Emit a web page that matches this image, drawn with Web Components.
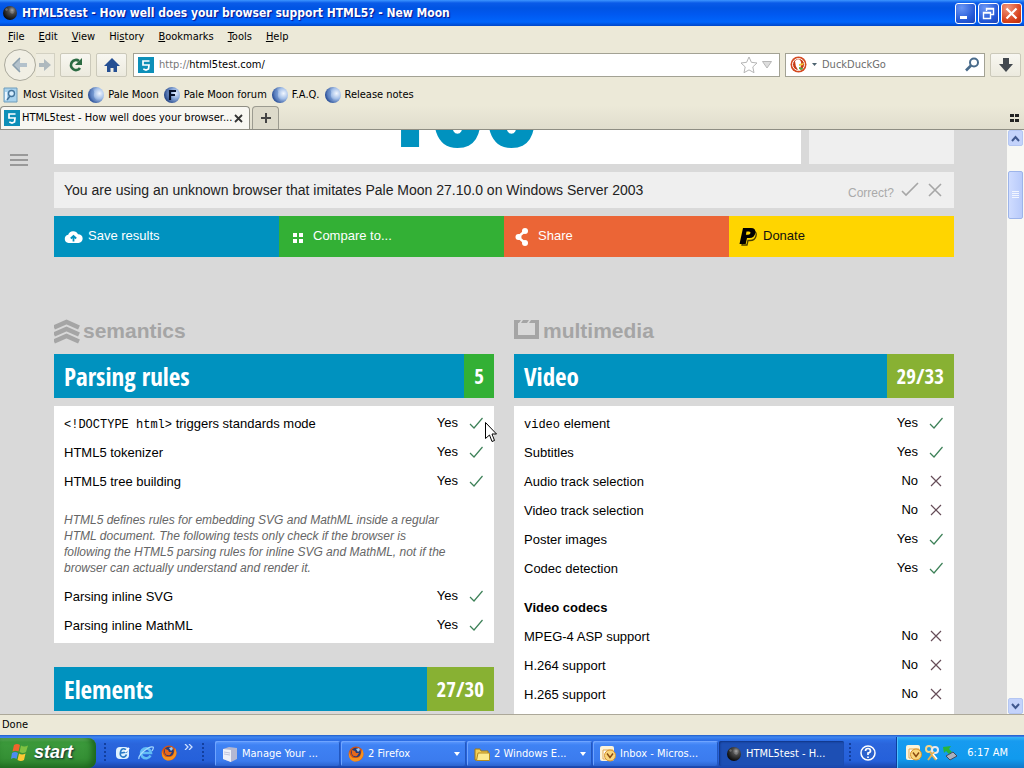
<!DOCTYPE html>
<html lang="en">
<head>
<meta charset="utf-8">
<title>HTML5test - How well does your browser support HTML5?</title>
<style>
html, body { margin: 0; height: 100%; overflow: hidden; }
body { font: 11px/16px "DejaVu Sans Condensed", "DejaVu Sans", sans-serif; color: #000; background: #ece9d8; }
</style>
</head>
<body>
<desktop-screen></desktop-screen>
<script>
const BASE = `*{box-sizing:border-box}svg{display:block;flex:none}
button{font:inherit;color:inherit;background:none;border:0;padding:0;margin:0}
a{color:inherit;text-decoration:none}`;
function define(name, html) {
  customElements.define(name, class extends HTMLElement {
    constructor() {
      super();
      const root = this.attachShadow({ mode: 'open' });
      const t = document.createElement('template');
      t.innerHTML = '<style>' + BASE + '</style>' + (typeof html === 'function' ? html(this) : html);
      root.append(t.content.cloneNode(true));
    }
  });
}

const ICONS = {
  moon: `<svg width="16" height="16" viewBox="0 0 16 16"><defs><radialGradient id="g" cx=".65" cy=".3" r=".7"><stop offset="0" stop-color="#aaa"/><stop offset=".35" stop-color="#4c4c4c"/><stop offset="1" stop-color="#0c0c0c"/></radialGradient></defs><circle cx="8" cy="8" r="7" fill="url(#g)"/><path d="M3 4l2-1 1 2-2 1zM8 7l3-1 1 2-2 1z" fill="#888" opacity=".6"/></svg>`,
  html5: `<svg width="16" height="16" viewBox="0 0 16 16"><path fill="#0d8fb8" d="M0 0h16v16H0z"/><path d="M11.500 4H5v4h6l-.5 4L8 13l-2.700-1" fill="none" stroke="#fff" stroke-width="1.700"/></svg>`,
  globe: `<svg width="16" height="16" viewBox="0 0 16 16"><defs><radialGradient id="g" cx=".72" cy=".4" r=".75"><stop offset="0" stop-color="#f2f7ff"/><stop offset=".45" stop-color="#a3bfe8"/><stop offset="1" stop-color="#1c4390"/></radialGradient></defs><circle cx="8" cy="8" r="8" fill="url(#g)"/><path d="M4 2q3 2 2 5t2 6q-4 0-5-3T4 2z" fill="#5580c4" opacity=".5"/></svg>`,
  forum: `<svg width="16" height="16" viewBox="0 0 16 16"><defs><radialGradient id="g" cx=".72" cy=".4" r=".75"><stop offset="0" stop-color="#e2ecff"/><stop offset=".45" stop-color="#87a6d8"/><stop offset="1" stop-color="#1c3d80"/></radialGradient></defs><circle cx="8" cy="8" r="8" fill="url(#g)"/><path d="M6 13V4h6M6 8h5" fill="none" stroke="#06102a" stroke-width="2.200"/></svg>`,
  visited: `<svg width="16" height="16" viewBox="0 0 16 16"><path d="M1 1h13v14H1z" fill="#a9d3ee" stroke="#6f9cba"/><path d="M3 13V5" stroke="#eaf6ff" stroke-width="2"/><circle cx="8.500" cy="6.500" r="3" fill="#d9efff" stroke="#44759c" stroke-width="1.400"/><path d="M7 9l-3 4" stroke="#44759c" stroke-width="1.600"/></svg>`,
  check: `<svg width="14" height="14" viewBox="0 0 14 14"><path d="M1 8l4 4 8.500-10" fill="none" stroke="#3d8158" stroke-width="1.200"/></svg>`,
  cross: `<svg width="14" height="14" viewBox="0 0 14 14"><path d="M2 2l10 10M12 2L2 12" fill="none" stroke="#664d58" stroke-width="1.200"/></svg>`,
  cloud: `<svg width="20" height="20" viewBox="0 0 20 20"><path d="M4.500 17a4.200 4.200 0 0 1-.3-8.300A5.300 5.300 0 0 1 14 8.200 4.400 4.400 0 0 1 14.500 17z" fill="#fff"/><path d="M9.500 15.500V10M6.800 12.500L9.500 10l2.700 2.500" fill="none" stroke="#0092bf" stroke-width="1.800"/></svg>`,
  grid: `<svg width="20" height="20" viewBox="0 0 20 20"><path d="M4 7h4v4H4zM10 7h4v4h-4zM4 13h4v4H4zM10 13h4v4h-4z" fill="#fff"/></svg>`,
  share: `<svg width="20" height="20" viewBox="0 0 20 20"><path d="M11 5L4 11l7 6" fill="none" stroke="#fff" stroke-width="2.400"/><circle cx="11" cy="5" r="3" fill="#fff"/><circle cx="4.500" cy="11" r="3" fill="#fff"/><circle cx="11" cy="17" r="3" fill="#fff"/></svg>`,
  paypal: `<svg width="20" height="20" viewBox="0 0 20 20"><path d="M15 5q3 1.500 2 5-1 4.500-6 4.500H9l-1 4.500H3l.2-1.200" fill="none" stroke="#4d4200" stroke-width="1.300"/><path d="M4 2h8q5 0 4.300 5Q15.500 12 10.500 12H8l-1.300 6H.5zM7.500 5.500l-.6 3.300H9q2.200 0 2.500-1.700Q11.700 5.500 10 5.500z" fill="#000" fill-rule="evenodd"/></svg>`,
  firefox: `<svg width="16" height="16" viewBox="0 0 16 16"><circle cx="8" cy="8" r="7.500" fill="#d9530e"/><circle cx="8" cy="6.500" r="4.800" fill="#263c78"/><path d="M1 5q1 8 7 7 4 0 5-4l1-5q3 5 0 9-3 4-8 3.500Q0 14 1 5z" fill="#f5921e"/><path d="M4 4l3 1 1 2 3 0-2 3q-4 1-5-2z" fill="#e7681b"/><path d="M8 3l3-1 1 2-2 2z" fill="#9cc8ef"/></svg>`,
  ie: `<svg width="16" height="16" viewBox="0 0 16 16"><path d="M12.500 10.500A5 5 0 1 1 13 8H4" fill="none" stroke="#62bdf5" stroke-width="2.600"/><path d="M1 14Q0 11 6 6t9-4q1 1-1 4" fill="none" stroke="#a8dcff" stroke-width="1.200"/></svg>`,
  desktop: `<svg width="16" height="16" viewBox="0 0 16 16"><rect x="1" y="2" width="13" height="12" rx="4" fill="#dff2ff"/><path d="M11.500 9.500q-1 3-4 2.500-3-1-2-5t4-3 2 3L6 8" fill="none" stroke="#2a7ac8" stroke-width="1.600"/><path d="M10 7l4-4" stroke="#fff" stroke-width="2"/></svg>`,
  server: `<svg width="16" height="16" viewBox="0 0 16 16"><path d="M1 3l6-2 8 1v11l-6 3-8-3z" fill="#b5b8d2"/><path d="M1 3l8 1v12l-8-3z" fill="#eef0f9"/><path d="M2 6l6 1M2 8l6 1" stroke="#c0c4dc"/></svg>`,
  folder: `<svg width="16" height="16" viewBox="0 0 16 16"><path d="M1 14V3h5l1 2h7v9z" fill="#f3cf55" stroke="#a37912"/><path d="M2.500 14.500L4 7h11.500v7.500z" fill="#fdeb90" stroke="#b58b20"/></svg>`,
  outlook: `<svg width="16" height="16" viewBox="0 0 16 16"><rect width="14" height="15" rx="2" fill="#fdf3d8"/><path d="M3 4h10v9H3z" fill="#fff" stroke="#e0a850"/><circle cx="10" cy="9.500" r="5.500" fill="#f9d67c" stroke="#d8932c"/><path d="M7 7.500l3 4 3-4" fill="none" stroke="#8a4a10" stroke-width="1.400"/></svg>`,
  keys: `<svg width="16" height="16" viewBox="0 0 16 16"><circle cx="5" cy="4" r="3" fill="none" stroke="#f5d68a" stroke-width="2"/><circle cx="11" cy="5" r="3" fill="none" stroke="#e9e9ef" stroke-width="2"/><path d="M6 7l6 8M10 7l-6 8" stroke="#e8b04c" stroke-width="2"/><path d="M9 9l4 5" stroke="#fff" stroke-width="1.500"/></svg>`,
  remove: `<svg width="16" height="16" viewBox="0 0 16 16"><path d="M1 2l8-1-2 3 3 3-3 2-3-3-2 2z" fill="#27b53a"/><path d="M4 11l7-4 4 4-7 4z" fill="#aab0bd" stroke="#3f4a60"/></svg>`,
  semantics: `<svg width="26" height="26" viewBox="0 0 26 26"><path d="M0 9.500L12.500 4 25 9.500M0 16.500L12.500 11 25 16.500M0 23.500L12.500 18 25 23.500" fill="none" stroke="#a5a5a5" stroke-width="4.600"/></svg>`,
  multimedia: `<svg width="26" height="26" viewBox="0 0 26 26"><path d="M2 4.500V19h21V4.500" fill="none" stroke="#a5a5a5" stroke-width="4"/><path d="M0 2h7L5 5H0zM9 2h6l-2 3H7zM17 2h8v3H15z" fill="#a5a5a5"/></svg>`
};
define('ui-icon', el => `<style>:host{display:block;flex:none}</style>${ICONS[el.getAttribute('name')]}`);

define('title-bar', `<style>
:host{display:flex;align-items:center;height:26px;padding:0 2px;gap:4px;color:#fff;background:linear-gradient(#3d95ff 0,#0a5be8 3px,#0054e3 8px,#0058f0 14px,#0065fc 22px,#0046c8 26px);font-weight:bold;font-size:12px}
.t{flex:1;text-shadow:1px 1px 1px #0f1089}.b{display:flex;gap:2px}
button{width:21px;height:21px;border:1px solid #fff;border-radius:3px;background:radial-gradient(circle at 30% 20%,#6a96f5,#2458d6 65%,#1c45b8)}
.x{background:radial-gradient(circle at 30% 20%,#f0967c,#d8421c 65%,#b52c0c)}
</style><ui-icon name="moon"></ui-icon><span class="t">HTML5test - How well does your browser support HTML5? - New Moon</span>
<div class="b"><button aria-label="Minimize"><svg width="19" height="19"><path d="M4 12h7v3H4z" fill="#fff"/></svg></button>
<button aria-label="Restore"><svg width="19" height="19"><path d="M7.500 7V4.500h7v6H12M7 5h8M4.500 8.500h7v6h-7zM4 9h8" fill="none" stroke="#fff" stroke-width="1.400"/></svg></button>
<button class="x" aria-label="Close"><svg width="19" height="19"><path d="M4.500 4.500l10 10M14.500 4.500l-10 10" stroke="#fff" stroke-width="2.200"/></svg></button></div>`);

define('menu-bar', `<style>:host{display:flex;align-items:center;height:21px;padding:0 8px;gap:14px}</style>
<button><u>F</u>ile</button><button><u>E</u>dit</button><button><u>V</u>iew</button><button>Hi<u>s</u>tory</button><button><u>B</u>ookmarks</button><button><u>T</u>ools</button><button><u>H</u>elp</button>`);

define('nav-bar', `<style>
:host{display:flex;align-items:center;height:35px;padding:0 3px 0 4px;gap:5px}
button{display:grid;place-items:center}
.bf{display:flex;align-items:center}
.back{width:32px;height:32px;border:1px solid #aaa99c;border-radius:50%;background:#f1efe4}
.fwd{width:19px;height:24px;border:1px solid #d3d1c2;border-left:0;background:#efede1}
.btn{width:31px;height:24px;border:1px solid #cbc9ba;border-radius:2px;background:linear-gradient(#f8f7f1,#eceade)}
.field{display:flex;align-items:center;height:24px;background:#fff;border:1px solid #a3a294}
.url{flex:1;padding:0 5px 0 4px;min-width:0}.search{width:200px;padding:0 4px;gap:4px}
input{font:inherit;border:0;padding:0;margin:0;background:none;min-width:0;flex:1;outline:0;color:#000}
input::placeholder{color:#6d6d6d;opacity:1}
.p{color:#777;margin-left:5px}.home{margin-right:1px}
</style>
<div class="bf"><button class="back" aria-label="Back"><svg width="18" height="18" viewBox="0 0 18 18"><path d="M9 2L2 9l7 7v-5h7V7H9z" fill="#b3c1cb"/><path d="M9 2L2 9l7 7" fill="none" stroke="#8a9eac" stroke-width="1.500"/></svg></button>
<button class="fwd" aria-label="Forward"><svg width="14" height="14" viewBox="0 0 14 14"><path d="M6 1l7 6-7 6V9H1V5h5z" fill="#aeb9be"/></svg></button></div>
<button class="btn" aria-label="Reload"><svg width="16" height="16" viewBox="0 0 16 16"><path d="M12 11a5 5 0 1 1-1-7" fill="none" stroke="#2c6b43" stroke-width="2.800"/><path d="M14 1v7H7z" fill="#2c6b43"/></svg></button>
<button class="btn home" aria-label="Home"><svg width="16" height="16" viewBox="0 0 16 16"><path d="M8 1l8 8h-3v6H9.500v-4h-3v4H3V9H0z" fill="#244f93"/></svg></button>
<div class="field url"><ui-icon name="html5"></ui-icon><span class="p">http://</span><input aria-label="Address" value="html5test.com/">
<svg width="18" height="18" viewBox="0 0 18 18"><path d="M9 1l2.400 5.300 5.600.7-4.200 3.900 1.200 5.800L9 13.900l-5 2.800 1.200-5.800L1 7l5.600-.7z" fill="#fff" stroke="#b5b5b5"/></svg>
<svg width="16" height="12" viewBox="0 0 16 12"><path d="M4.500 2.500h9L9 9z" fill="#ddd" stroke="#b7b7b7"/></svg></div>
<div class="field search"><svg width="17" height="17" viewBox="0 0 17 17"><circle cx="8.500" cy="8.500" r="8" fill="#d44a20"/><circle cx="8.500" cy="8.500" r="6" fill="#c73c16" stroke="#fff"/><path d="M5 5q3-3 5-1 2 2 1 5l-1 5H8Q5 10 5 5z" fill="#fff"/><path d="M9 8l5-1-1 2-4 1z" fill="#f8c83c"/><path d="M9 11l4 1-1 2-3-1z" fill="#55a847"/></svg>
<svg width="7" height="5"><path d="M1 1h5L3.500 4z" fill="#4d6370"/></svg><input aria-label="Search" placeholder="DuckDuckGo">
<svg width="15" height="15" viewBox="0 0 15 15"><circle cx="9" cy="5.500" r="4" fill="none" stroke="#496b8b" stroke-width="2"/><path d="M6 8.500l-5 5" stroke="#496b8b" stroke-width="2.600"/></svg></div>
<button class="btn" aria-label="Downloads"><svg width="16" height="16" viewBox="0 0 16 16"><path d="M5 1h6v6h4l-7 8-7-8h4z" fill="#42484e"/></svg></button>`);

define('bookmark-link', el => `<style>:host{display:block}a{display:flex;align-items:center;gap:4px}</style><a href="#"><ui-icon name="${el.getAttribute('icon')}"></ui-icon><slot></slot></a>`);
define('bookmarks-bar', `<style>:host{box-sizing:border-box;display:flex;align-items:center;height:24px;padding:2px 3px 0;gap:5px}</style>
<bookmark-link icon="visited">Most Visited</bookmark-link><bookmark-link icon="globe">Pale Moon</bookmark-link><bookmark-link icon="forum">Pale Moon forum</bookmark-link><bookmark-link icon="globe">F.A.Q.</bookmark-link><bookmark-link icon="globe">Release notes</bookmark-link>`);

define('tab-strip', `<style>
:host{box-sizing:border-box;display:flex;align-items:flex-end;height:24px;border-bottom:1px solid #8e8d83;gap:2px;padding-right:5px;background:linear-gradient(#ece9d8,#e0ddcd)}
.tab{display:flex;align-items:center;gap:2px;width:250px;height:23px;padding:0 6px 0 3px;border:1px solid #8e8d83;border-bottom:0;border-radius:4px 4px 0 0;background:#f8f7f2}
.tab span{flex:1;white-space:nowrap}
.new{display:grid;place-items:center;width:27px;height:23px;border:1px solid #9c9b90;border-bottom:0;border-radius:4px 4px 0 0;background:#dddaca}
.groups{margin:0 0 7px auto}
</style><div class="tab"><ui-icon name="html5"></ui-icon><span>HTML5test - How well does your browser...</span><button aria-label="Close tab"><svg width="9" height="9"><path d="M1 1l7 7M8 1L1 8" stroke="#333" stroke-width="1.800"/></svg></button></div>
<button class="new" aria-label="New tab"><svg width="12" height="12"><path d="M6 1v10M1 6h10" stroke="#444" stroke-width="2"/></svg></button>
<button class="groups" aria-label="Tab groups"><svg width="9" height="8"><path d="M0 0h4v3H0zM5 0h4v3H5zM0 5h4v3H0zM5 5h4v3H5z" fill="#222"/></svg></button>`);

define('score-banner', `<style>
:host{display:grid;grid-template-columns:1fr 145px;gap:8px;height:34px;overflow:hidden}
.main{background:#fff;display:flex;align-items:flex-end;justify-content:center;padding-left:60px;min-height:0}
.side{background:#efefef}
strong{color:#0092bf;font:800 92px/105px "Open Sans",sans-serif}
</style><div class="main"><strong>100</strong></div><div class="side"></div>`);

define('browser-notice', `<style>
:host{display:flex;align-items:center;height:36px;box-sizing:border-box;padding:0 10px;background:#efefef;color:#222;font-size:14px}
.t{flex:1}.c{font-size:12px;color:#aaa;margin-right:6px;padding-top:6px}
button+button{margin-left:6px}path{fill:none;stroke:#a6a6a6;stroke-width:1.600}
</style><span class="t">You are using an unknown browser that imitates Pale Moon 27.10.0 on Windows Server 2003</span><span class="c">Correct?</span>
<button aria-label="Correct"><svg width="20" height="18"><path d="M2 10l4 4L18 2"/></svg></button><button aria-label="Incorrect"><svg width="18" height="18"><path d="M3 3l12 12M15 3L3 15"/></svg></button>`);

define('action-tile', el => `<style>
:host{display:block;background:var(--tile);color:var(--ink,#fff)}
button{display:flex;align-items:center;gap:4px;width:100%;height:41px;padding:0 10px 2px;text-align:left;font-size:13px}
</style><button><ui-icon name="${el.getAttribute('icon')}"></ui-icon><slot></slot></button>`);
define('action-row', `<style>:host{display:grid;grid-template-columns:repeat(4,1fr)}
.s{--tile:#0092bf}.c{--tile:#33b035}.h{--tile:#eb6536}.d{--tile:#ffd500;--ink:#111}</style>
<action-tile class="s" icon="cloud">Save results</action-tile><action-tile class="c" icon="grid">Compare to...</action-tile><action-tile class="h" icon="share">Share</action-tile><action-tile class="d" icon="paypal">Donate</action-tile>`);

define('topic-heading', el => `<style>:host{display:block}
h2{display:flex;align-items:center;gap:3px;margin:0 0 10px;height:26px;font:bold 21px/26px "Liberation Sans",Arial,sans-serif;color:#a5a5a5}</style>
<h2><ui-icon name="${el.getAttribute('icon')}"></ui-icon><slot></slot></h2>`);

define('section-title', el => `<style>
:host{display:flex;height:44px;background:#0092bf;color:#fff;font:bold 25px/44px "Open Sans Condensed","Roboto Condensed","Open Sans",sans-serif}
h3{font:inherit;margin:0;flex:1;padding-left:10px}
.n{padding:0 10px;font-size:21px;background:${el.getAttribute('tone')}}
</style><h3><slot></slot></h3><span class="n">${el.getAttribute('score')}</span>`);

const RESULTS = {
  parsing: [
    ['<code>&lt;!DOCTYPE html&gt;</code> triggers standards mode', 1], ['HTML5 tokenizer', 1], ['HTML5 tree building', 1],
    { note: 'HTML5 defines rules for embedding SVG and MathML inside a regular HTML document. The following tests only check if the browser is following the HTML5 parsing rules for inline SVG and MathML, not if the browser can actually understand and render it.' },
    ['Parsing inline SVG', 1], ['Parsing inline MathML', 1]],
  video: [
    ['<code>video</code> element', 1], ['Subtitles', 1], ['Audio track selection', 0], ['Video track selection', 0], ['Poster images', 1], ['Codec detection', 1],
    { head: 'Video codecs' }, ['MPEG-4 ASP support', 0], ['H.264 support', 0], ['H.265 support', 0]]
};
define('result-table', el => `<style>
:host{display:block;background:#fff;padding:3px 0;font-size:13px}
table{width:100%;border-collapse:collapse}
th,td{height:29px;padding:0;text-align:left;font-weight:normal;vertical-align:middle;line-height:16px}
th:first-child,.note{padding-left:10px}
.a{width:60px;text-align:right;padding-bottom:2px}
.i{width:36px;padding:0 10px 2px 11px}
tr .note{font-size:12px;font-style:italic;color:#666;padding:16px 40px 6px 10px}
tr .head{height:39px;padding-top:10px;font-weight:bold}
code{font:12px "Liberation Mono","Courier New",monospace}
</style><table><tbody>${RESULTS[el.getAttribute('section')].map(r =>
  r.note ? `<tr><td class="note" colspan="3">${r.note}</td></tr>` :
  r.head ? `<tr><th class="head" colspan="3">${r.head}</th></tr>` :
  `<tr><th scope="row">${r[0]}</th><td class="a">${r[1] ? 'Yes' : 'No'}</td><td class="i"><ui-icon name="${r[1] ? 'check' : 'cross'}"></ui-icon></td></tr>`).join('')}</tbody></table>`);

define('test-page', `<style>
:host{display:flex;flex:1;min-width:0;overflow:hidden;background:#d9d9d9;font-family:"Liberation Sans",Arial,sans-serif}
.menu{align-self:flex-start;width:54px;padding:24px 10px}
main{flex:1;min-width:0;margin-right:53px;display:flex;flex-direction:column;gap:8px}
.cols{flex:1;display:grid;grid-template-columns:1fr 1fr;gap:20px;padding-top:53px}
section{display:flex;flex-direction:column}
result-table{margin:8px 0 24px}.fill{flex:1;margin-bottom:0}
</style><button class="menu" aria-label="Menu"><svg width="18" height="12"><path d="M0 1h18M0 6h18M0 11h18" stroke="#999" stroke-width="2"/></svg></button>
<main><score-banner></score-banner><browser-notice></browser-notice><action-row></action-row>
<div class="cols"><section><topic-heading icon="semantics">semantics</topic-heading><section-title score="5" tone="#33b035">Parsing rules</section-title><result-table section="parsing"></result-table><section-title score="27/30" tone="#88b133">Elements</section-title></section>
<section><topic-heading icon="multimedia">multimedia</topic-heading><section-title score="29/33" tone="#88b133">Video</section-title><result-table class="fill" section="video"></result-table></section></div></main>`);

define('scroll-bar', `<style>
:host{box-sizing:border-box;display:flex;flex-direction:column;width:17px;padding:0 1px;background:#f8f8f4}
button,.thumb{display:grid;place-items:center;height:16px;border:1px solid #b4c6f2;border-radius:2px;background:#c4d3fb}
.thumb{height:48px;margin-top:25px;margin-bottom:auto;border-color:#9db4ea;background:linear-gradient(90deg,#cfdcff,#b8cafa)}
</style><button aria-label="Scroll up"><svg width="9" height="7"><path d="M1 6l3.500-4L8 6" fill="none" stroke="#40588f" stroke-width="2"/></svg></button><div class="thumb"><svg width="7" height="8"><path d="M0 .5h7M0 2.500h7M0 4.500h7M0 6.500h7" stroke="#f2f6ff"/></svg></div><button aria-label="Scroll down"><svg width="9" height="7"><path d="M1 1l3.500 4L8 1" fill="none" stroke="#40588f" stroke-width="2"/></svg></button>`);

define('task-button', el => `<style>
:host{display:block;flex:1;max-width:125px;min-width:0}
button{display:flex;align-items:center;gap:4px;width:100%;height:25px;padding:0 6px 0 7px;border-radius:2px;color:#fff;white-space:nowrap;background:linear-gradient(#5f9bff 0,#3f82f4 4px,#3b7bee 20px,#2c64cf);box-shadow:inset 1px 1px #6ea4ff,inset -1px 0 #2257bf}
:host([active]) button{background:#1d4fb4;box-shadow:inset 1px 1px 2px #0f3484}
svg{margin-left:auto}
</style><button><ui-icon name="${el.getAttribute('icon')}"></ui-icon><span><slot></slot></span>${el.hasAttribute('group') ? '<svg width="6" height="4"><path d="M0 0h6L3 4z" fill="#fff"/></svg>' : ''}</button>`);

define('task-bar', `<style>
:host{display:flex;align-items:flex-end;height:33px;color:#fff;background:linear-gradient(#1f5cc8 0,#3f86f0 2px,#2d6fe6 5px,#2a65dc 9px,#2560da 26px,#1a44a8 33px)}
.start{display:flex;align-items:center;gap:4px;width:96px;height:30px;padding:0 0 2px 11px;border-radius:0 8px 8px 0;font:italic bold 18px/26px "Liberation Sans",Arial,sans-serif;text-shadow:1px 1px 2px #123;background:linear-gradient(#69b567 0,#3c9a3c 4px,#359035 20px,#2a7a2a 30px);box-shadow:inset -4px -1px 6px #1c651c}
.quick{display:flex;align-items:center;height:30px;gap:7px;padding-left:8px;width:119px}
.grip{flex:none;width:4px;height:20px;background:radial-gradient(circle at 1px 1px,#123f9f 1px,transparent 1px) 0 0/4px 4px}
.more{align-self:flex-start;padding-top:6px;margin-right:2px}
.tasks{display:flex;flex:1;min-width:0;gap:1px;padding-bottom:2px}
.help{display:flex;align-items:center;height:30px;width:51px;gap:7px;padding-left:4px}
.tray{display:flex;align-items:center;height:31px;width:128px;gap:2px;padding:0 16px 0 9px;background:linear-gradient(#37b5f5 0,#179bf0 4px,#109aee 22px,#1078c8);border-left:1px solid #0c3f9e;box-shadow:inset 1px 0 #4fc0ff}
time{margin-left:auto;white-space:nowrap}
</style><button class="start"><svg width="19" height="19" viewBox="0 0 19 19"><path d="M3 2q3-2 6 0L7.500 8.500q-3-1.500-6 0z" fill="#f0652c"/><path d="M10 2.500q3 2 7 0L15 9q-3 2-6.500 0z" fill="#7fc242"/><path d="M1 10q3-2 6 0L5.500 16q-3-2-5.500 0z" fill="#4d8cf0"/><path d="M8 10.500q3 2 6.500 0L13 17q-3 2-6.500 0z" fill="#fbc934"/></svg><span>start</span></button>
<div class="quick"><span class="grip"></span><button aria-label="Show desktop"><ui-icon name="desktop"></ui-icon></button><button aria-label="Internet Explorer"><ui-icon name="ie"></ui-icon></button><button aria-label="Firefox"><ui-icon name="firefox"></ui-icon></button><button class="more" aria-label="More"><svg width="9" height="6"><path d="M1 0l3 3-3 3M5 0l3 3-3 3" fill="none" stroke="#cfe0ff" stroke-width="1.300"/></svg></button><span class="grip"></span></div>
<div class="tasks"><task-button icon="server">Manage Your ...</task-button><task-button icon="firefox" group>2 Firefox</task-button><task-button icon="folder" group>2 Windows E...</task-button><task-button icon="outlook">Inbox - Micros...</task-button><task-button icon="moon" active>HTML5test - H...</task-button></div>
<div class="help"><span class="grip"></span><button aria-label="Help"><svg width="16" height="16"><circle cx="8" cy="8" r="7" fill="#2c62cc" stroke="#fff" stroke-width="1.500"/><path d="M5.500 6q0-2.500 2.500-2.500T10.500 6Q10.500 7.500 8 8v2M8 11.500v1.500" fill="none" stroke="#fff" stroke-width="1.700"/></svg></button></div>
<div class="tray"><ui-icon name="outlook"></ui-icon><ui-icon name="keys"></ui-icon><ui-icon name="remove"></ui-icon><time>6:17 AM</time></div>`);

define('desktop-screen', `<style>
:host{display:flex;flex-direction:column;height:100vh;position:relative}
.view{display:flex;flex:1;min-height:0}
.status{height:21px;padding:2px;border-top:1px solid #aca899;background:#ece9d8}
.cursor{position:absolute;left:485px;top:422px}
</style><title-bar></title-bar><menu-bar></menu-bar><nav-bar></nav-bar><bookmarks-bar></bookmarks-bar><tab-strip></tab-strip>
<div class="view"><test-page></test-page><scroll-bar></scroll-bar></div><div class="status">Done</div><task-bar></task-bar>
<svg class="cursor" width="12" height="21" viewBox="0 0 12 21"><path d="M.5.5v16l4-3.500 2.500 6.500 2.500-1L7 12h4.500z" fill="#fff" stroke="#000"/></svg>`);
</script>
</body>
</html>
